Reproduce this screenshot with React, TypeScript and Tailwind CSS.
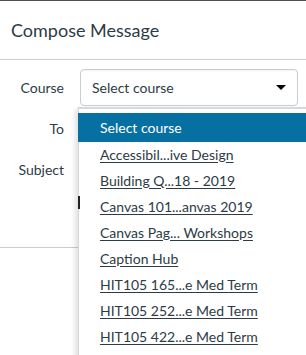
import React from "react";

const courses = [
  "Accessibil...ive Design",
  "Building Q...18 - 2019",
  "Canvas 101...anvas 2019",
  "Canvas Pag... Workshops",
  "Caption Hub",
  "HIT105 165...e Med Term",
  "HIT105 252...e Med Term",
  "HIT105 422...e Med Term",
];

export default function App() {
  return (
    <div className="relative h-[355px] w-[306px] overflow-hidden bg-white text-[#2d3b45] border-t border-[#4a5257] font-['Lato','Liberation_Sans',sans-serif]">
      {/* header */}
      <div className="h-[59px] border-b border-[#c7cdd1] flex items-center pl-[11px]">
        <h1 className="text-[18px] leading-none pb-[1px]">Compose Message</h1>
      </div>

      {/* form */}
      <div className="flex flex-col pt-[9px]">
        <div className="flex items-center h-[37px]">
          <label className="w-[64px] text-right text-[14px]">Course</label>
          <div className="ml-[16px] w-[218px] h-[37px] rounded-[4px] border border-[#c7cdd1] flex items-center justify-between pl-[11px] pr-[11px] text-[14px] shadow-[inset_0_1px_1px_rgba(0,0,0,0.05)]">
            <span>Select course</span>
            <span className="w-0 h-0 border-l-[5px] border-r-[5px] border-t-[5px] border-l-transparent border-r-transparent border-t-[#000]" />
          </div>
        </div>
        <div className="flex items-center h-[30px] mt-[7px]">
          <label className="w-[64px] text-right text-[14px]">To</label>
        </div>
        <div className="flex items-center h-[30px] mt-[11px]">
          <label className="w-[64px] text-right text-[14px]">Subject</label>
        </div>
        <div className="mt-[63px] border-b border-[#c7cdd1]" />
      </div>

      {/* dropdown menu overlay */}
      <div className="absolute left-[78px] top-[106px] w-[240px] bg-white border-t-[2px] border-l border-[#d5d9dc] shadow-[-3px_2px_5px_rgba(0,0,0,0.12)] pt-[4px] pb-[10px]">
        <div className="h-[29px] -ml-px -mb-px bg-[#0770a3] text-white text-[14px] flex items-center pl-[22px]">
          Select course
        </div>
        {courses.map((c) => (
          <div key={c} className="h-[26px] flex items-center pl-[21px] text-[14px] underline underline-offset-[2px]">
            {c}
          </div>
        ))}
      </div>

      {/* text caret peeking at the menu edge */}
      <div className="absolute left-[78px] top-[195px] w-[2px] h-[13px] bg-[#222]" />
    </div>
  );
}
